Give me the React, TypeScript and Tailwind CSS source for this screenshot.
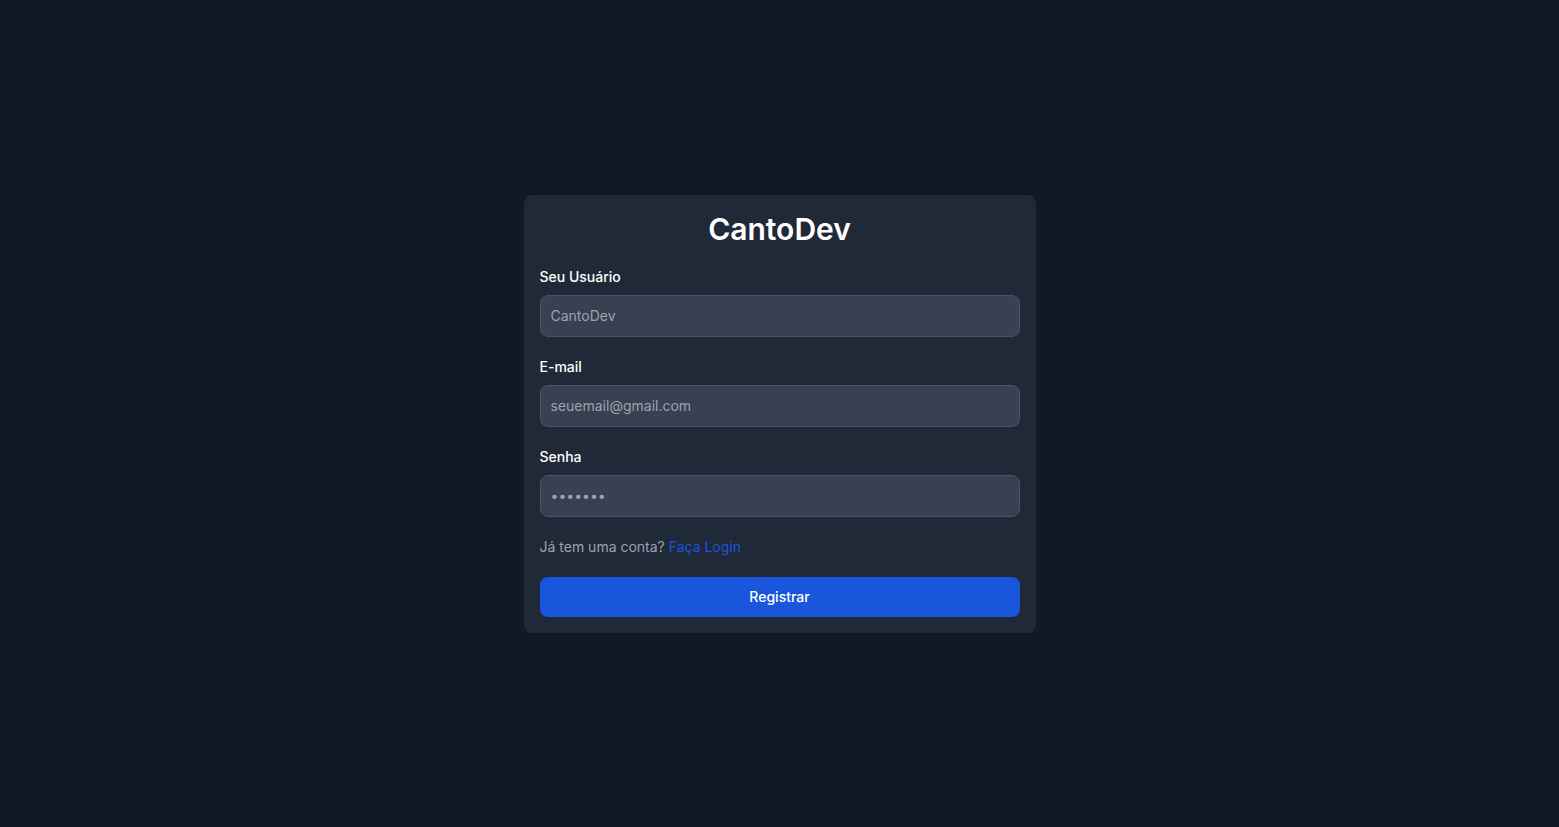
import React from "react";

export default function App() {
  return (
    <div
      className="min-h-screen w-full bg-[#111827] flex items-center justify-center"
      style={{ fontFamily: "Inter, 'Noto Sans', sans-serif" }}
    >
      <div className="w-[512px] bg-[#1f2937] rounded-lg p-4">
        <h1 className="text-3xl font-semibold text-white text-center mb-5">CantoDev</h1>
        <form className="flex flex-col gap-5" onSubmit={(e) => e.preventDefault()}>
          <div>
            <label className="block mb-2 text-sm font-medium text-white">Seu Usuário</label>
            <input
              type="text"
              placeholder="CantoDev"
              className="block w-full p-2.5 text-sm text-white bg-[#374151] border border-[#4b5563] rounded-lg placeholder-[#9ca3af] outline-none"
            />
          </div>
          <div>
            <label className="block mb-2 text-sm font-medium text-white">E-mail</label>
            <input
              type="email"
              placeholder="seuemail@gmail.com"
              className="block w-full p-2.5 text-sm text-white bg-[#374151] border border-[#4b5563] rounded-lg placeholder-[#9ca3af] outline-none"
            />
          </div>
          <div>
            <label className="block mb-2 text-sm font-medium text-white">Senha</label>
            <input
              type="password"
              placeholder="•••••••"
              className="block w-full p-2.5 text-sm text-white bg-[#374151] border border-[#4b5563] rounded-lg placeholder-[#9ca3af] outline-none"
            />
          </div>
          <p className="text-sm text-[#9ca3af]">
            Já tem uma conta? <a href="#" className="text-[#1a56db]">Faça Login</a>
          </p>
          <button
            type="submit"
            className="w-full py-2.5 text-sm font-medium text-white bg-[#1a56db] rounded-lg"
          >
            Registrar
          </button>
        </form>
      </div>
    </div>
  );
}
